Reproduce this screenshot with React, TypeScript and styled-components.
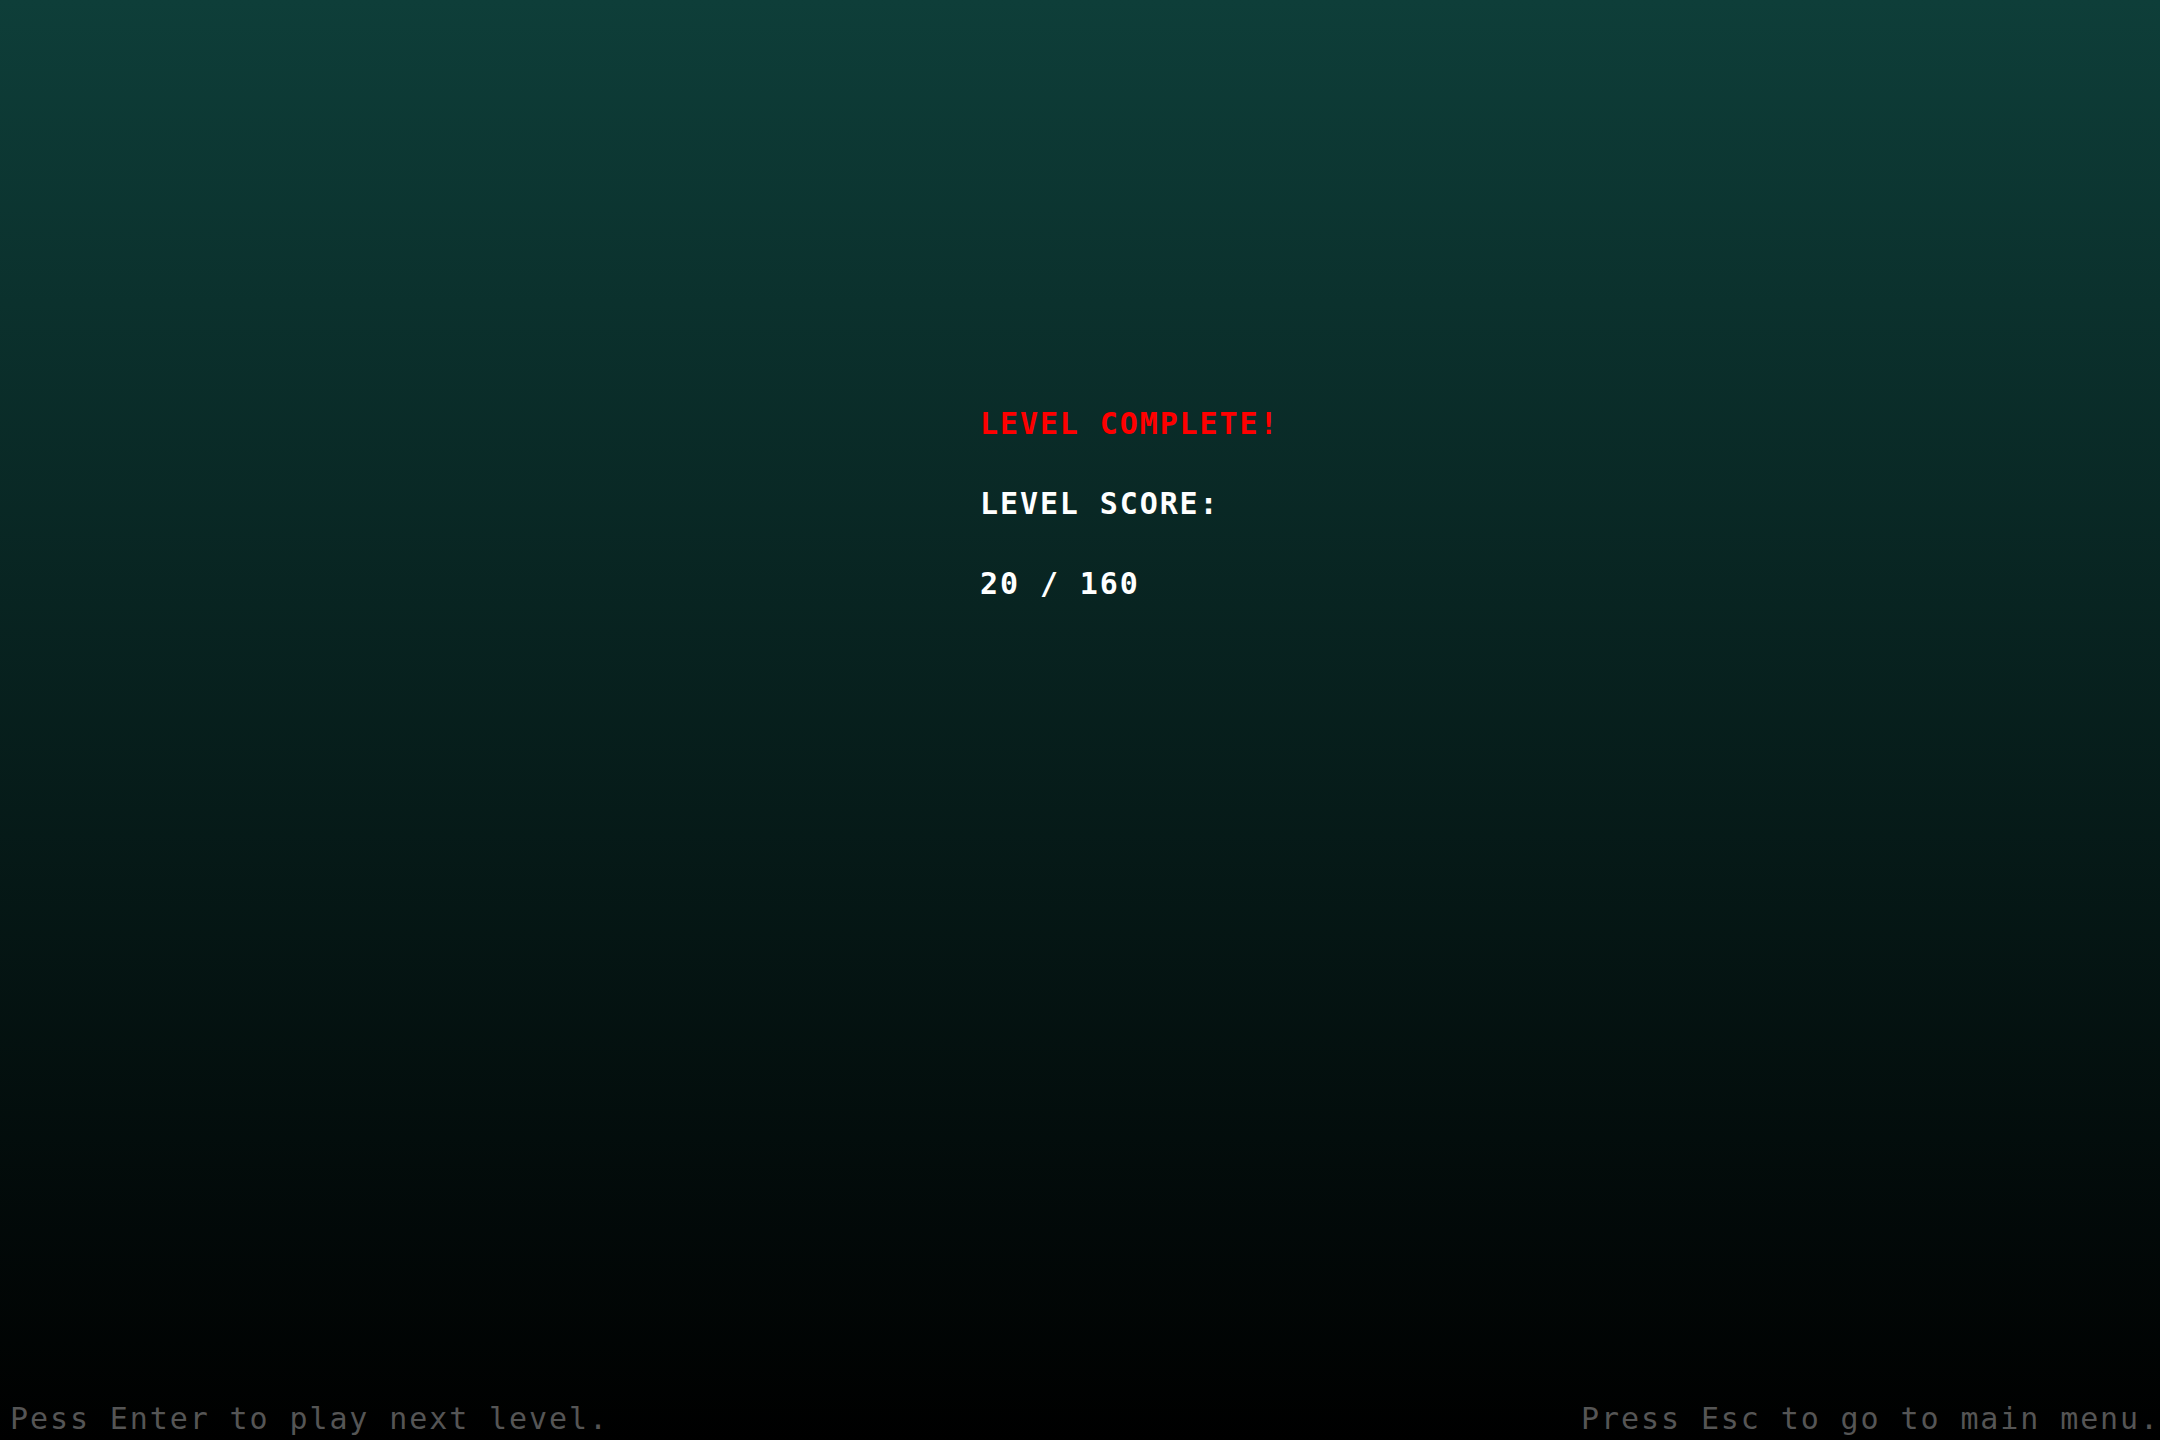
import React from "react";
import styled, { createGlobalStyle } from "styled-components";

const GlobalStyle = createGlobalStyle`
  html, body, #root {
    margin: 0;
    padding: 0;
    height: 100%;
  }
  body {
    background: #000;
    font-family: "DejaVu Sans Mono", "Liberation Mono", monospace;
  }
`;

const Screen = styled.div`
  width: 100%;
  height: 100vh;
  display: flex;
  flex-direction: column;
  background: linear-gradient(to bottom, #0e3e39 0%, #000 100%);
  overflow: hidden;
`;

const Main = styled.main`
  flex: 1;
  display: flex;
  justify-content: center;
  padding-top: 404px;
`;

const Panel = styled.div`
  width: 200px;
  display: flex;
  flex-direction: column;
  gap: 40px;
`;

const Line = styled.div<{ $accent?: boolean }>`
  font-family: "DejaVu Sans Mono", "Liberation Mono", monospace;
  font-weight: bold;
  font-size: 30px;
  letter-spacing: 1.9px;
  line-height: 40px;
  white-space: nowrap;
  color: ${(p) => (p.$accent ? "#ff0000" : "#ffffff")};
`;

const Footer = styled.footer`
  display: flex;
  justify-content: space-between;
  align-items: flex-end;
  padding: 0 0 2px 10px;
`;

const Hint = styled.span`
  font-family: "DejaVu Sans Mono", "Liberation Mono", monospace;
  font-size: 30px;
  letter-spacing: 1.9px;
  line-height: 38px;
  color: #555555;
  white-space: nowrap;
`;

export default function App() {
  return (
    <>
      <GlobalStyle />
      <Screen>
        <Main>
          <Panel>
            <Line $accent>LEVEL COMPLETE!</Line>
            <Line>LEVEL SCORE:</Line>
            <Line>20 / 160</Line>
          </Panel>
        </Main>
        <Footer>
          <Hint>Pess Enter to play next level.</Hint>
          <Hint>Press Esc to go to main menu.</Hint>
        </Footer>
      </Screen>
    </>
  );
}
